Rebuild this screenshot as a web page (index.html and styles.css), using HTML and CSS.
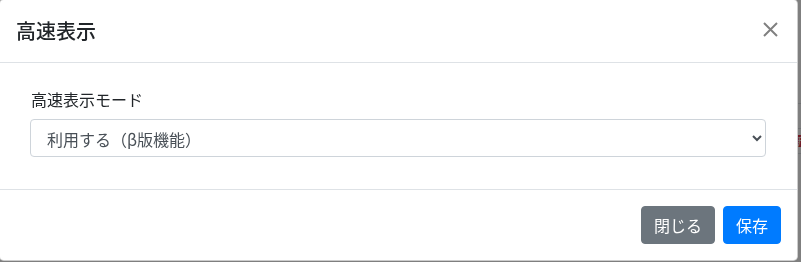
FILE: index.html
```html
<!DOCTYPE html>
<html lang="ja">
  <head>
    <meta charset="UTF-8" />
    <meta name="viewport" content="width=device-width, initial-scale=1.0" />
    <title>高速表示</title>
    <link rel="stylesheet" href="styles.css">
  </head>
  <body>
    <!-- 背後のページ -->
    <div class="page">
      <div class="page-rows">
        <div class="page-row"></div>
        <div class="page-row"><span class="page-badge">新</span></div>
        <div class="page-row"></div>
      </div>
      <div class="page-text">自動削除対象期間の設定と一括処理</div>
    </div>
    <div class="backdrop"></div>

    <div class="modal">
      <div class="modal-header">
        <h5 class="modal-title">高速表示</h5>
        <button class="close" type="button" aria-label="Close">
          <svg width="15" height="15" viewBox="0 0 15 15">
            <path d="M1 1L14 14M14 1L1 14" stroke="currentColor" stroke-width="2" fill="none" />
          </svg>
        </button>
      </div>

      <div class="modal-body">
        <div class="form-group">
          <label for="fast-mode">高速表示モード</label>
          <select id="fast-mode" class="form-control">
            <option value="1" selected>利用する（β版機能）</option>
            <option value="0">利用しない</option>
          </select>
        </div>
      </div>

      <div class="modal-footer">
        <button class="btn btn-secondary" type="button">閉じる</button>
        <button class="btn btn-primary" type="button">保存</button>
      </div>
    </div>
  </body>
</html>
```

FILE: styles.css
```css
body {
  margin: 0;
  font-family: "Noto Sans CJK JP", "Noto Sans", sans-serif;
  font-size: 16px;
  line-height: 1.5;
  color: #212529;
  background-color: #fff;
  overflow: hidden;
}
.page {
  height: 262px;
  padding-top: 103px;
  box-sizing: border-box;
  overflow: hidden;
}
.page-rows {
  display: flex;
  flex-direction: column;
}
.page-row {
  height: 24px;
  border-top: 1px solid #dee2e6;
  display: flex;
  justify-content: flex-end;
  align-items: center;
}
.page-badge {
  background-color: #dc3545;
  color: #fff;
  font-size: 11px;
  line-height: 12px;
  padding: 0 3px;
  margin-right: -6px;
}
.page-text {
  margin-top: 84px;
  margin-left: 196px;
  padding-left: 4px;
  border-left: 2px solid #007bff;
  font-size: 18px;
  line-height: 20px;
}
.backdrop {
  position: fixed;
  inset: 0;
  background-color: rgba(0, 0, 0, 0.5);
}
.modal {
  position: fixed;
  top: -1px;
  left: -1px;
  width: 799px;
  box-sizing: border-box;
  background-color: #fff;
  border: 1px solid rgba(0, 0, 0, 0.2);
  border-radius: 0.3rem;
}
.modal-header {
  display: flex;
  justify-content: space-between;
  align-items: flex-start;
  padding: 16px;
  border-bottom: 1px solid #dee2e6;
}
.modal-title {
  margin: 0;
  font-size: 20px;
  font-weight: 500;
  line-height: 30px;
}
.close {
  padding: 0;
  margin: 6px 3px 0 0;
  border: none;
  background: none;
  color: #808080;
  display: flex;
}
.modal-body {
  padding: 24px 31px 16px 30px;
}
.form-group {
  margin-bottom: 16px;
}
label {
  display: block;
  margin-bottom: 8px;
  padding-left: 1px;
}
.form-control {
  display: block;
  width: 100%;
  height: 38px;
  padding: 6px 12px;
  font-family: inherit;
  font-size: 16px;
  line-height: 1.5;
  color: #495057;
  background-color: #fff;
  border: 1px solid #ced4da;
  border-radius: 0.25rem;
}
.modal-footer {
  display: flex;
  justify-content: flex-end;
  gap: 8px;
  padding: 16px;
  border-top: 1px solid #dee2e6;
}
.btn {
  font-family: inherit;
  font-size: 16px;
  line-height: 1.5;
  padding: 6px 12px;
  border: 1px solid transparent;
  border-radius: 0.25rem;
  color: #fff;
  cursor: pointer;
}
.btn-secondary {
  background-color: #6c757d;
  border-color: #6c757d;
}
.btn-primary {
  background-color: #007bff;
  border-color: #007bff;
}
```
